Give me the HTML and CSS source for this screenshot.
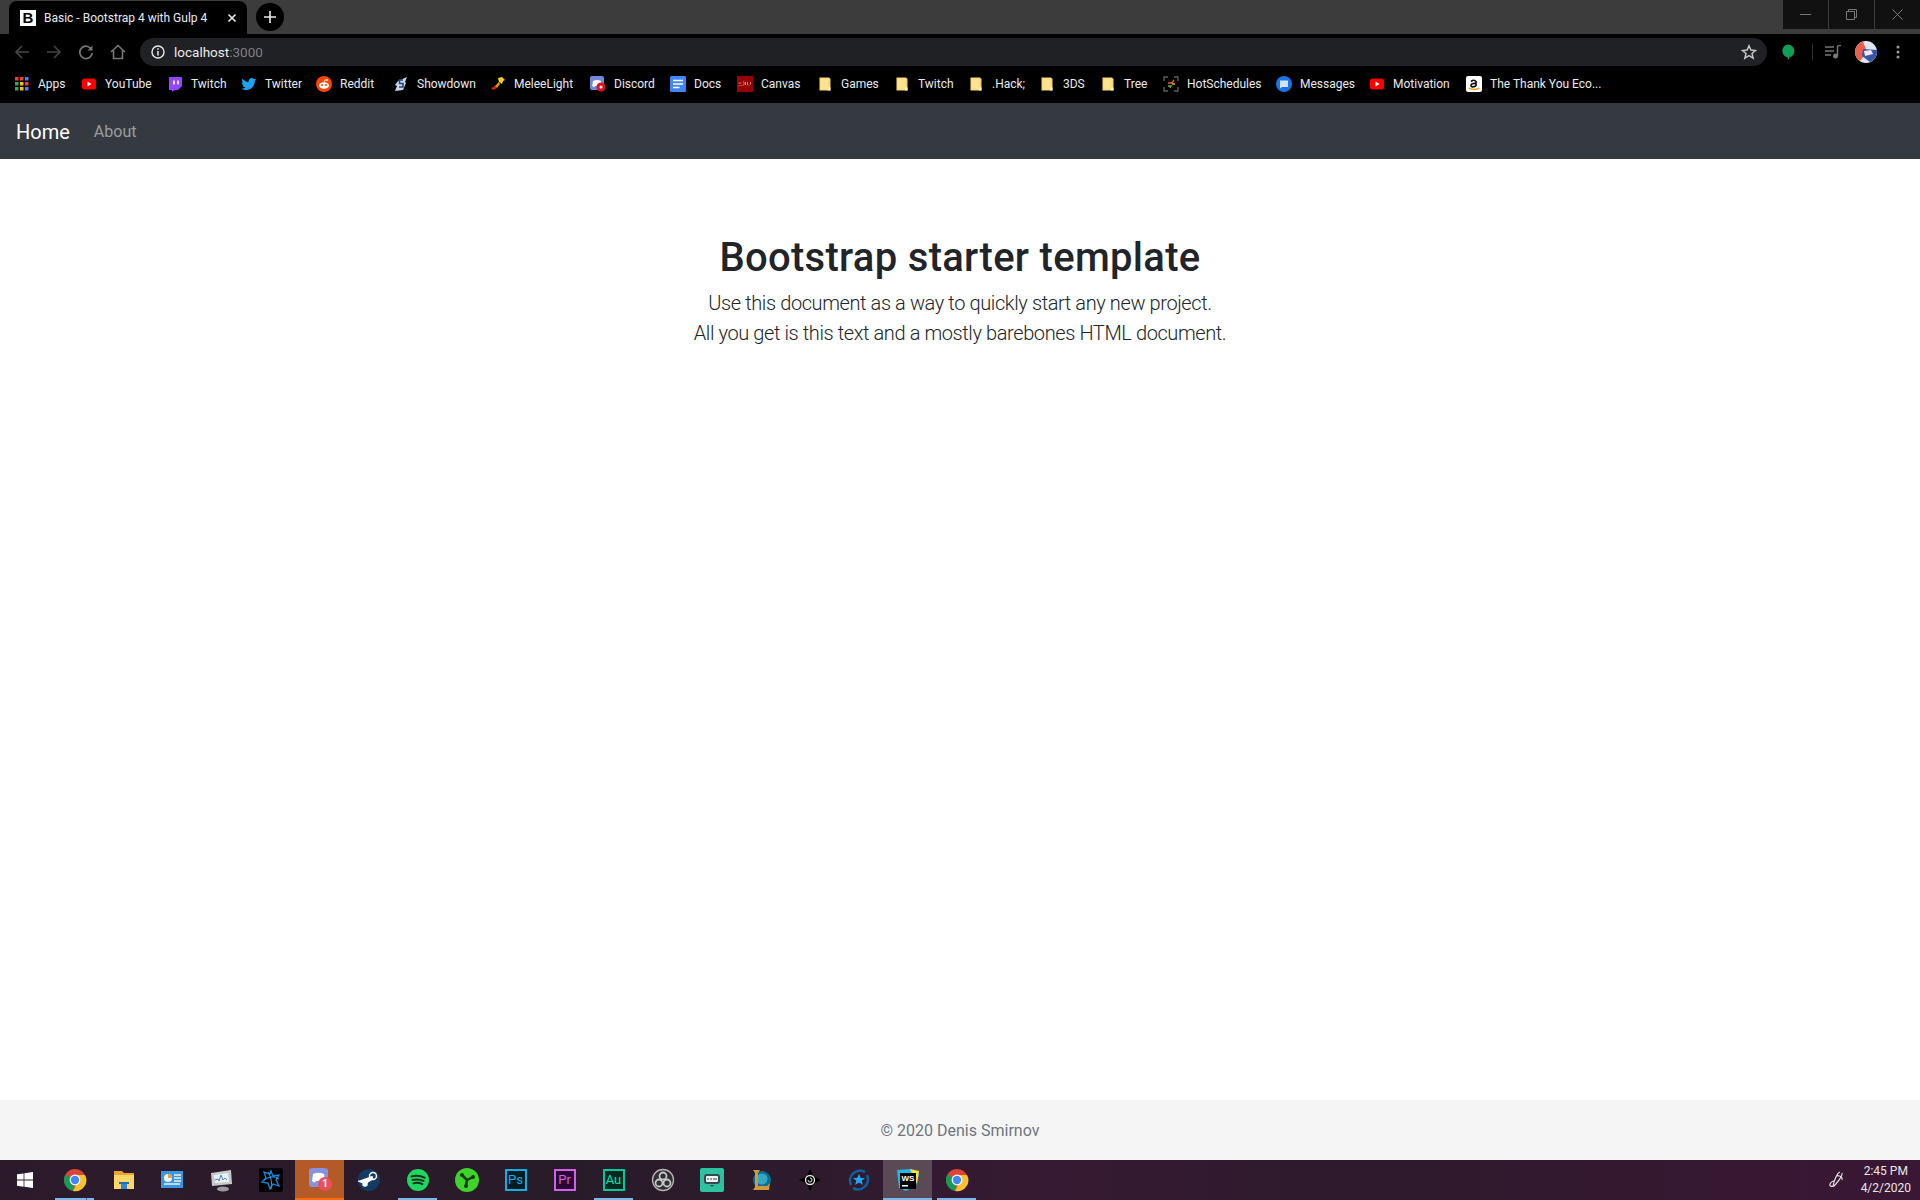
FILE: index.html
```html
<!DOCTYPE html>
<html lang="en">
<head>
    <meta charset="UTF-8">
    <title>Basic - Bootstrap 4 with Gulp 4</title>
    <link rel="stylesheet" href="styles.css">
</head>
<body>
    <svg class="defs" width="0" height="0">
        <symbol id="folder" viewBox="0 0 16 16">
            <path d="M2.500 1.500h9.500l1.500 1.500v11.500h-11z" fill="#fdd663"/>
            <path d="M3.500 2.500h8v11h-8z" fill="#fde293"/>
            <path d="M11 14.500v-3h2.500v3z" fill="#fff3c4"/>
        </symbol>
        <symbol id="yt" viewBox="0 0 16 16">
            <rect x="1" y="2.500" width="14" height="11" rx="2.500" fill="#f00"/>
            <path d="M6.500 5.500l4 2.500-4 2.500z" fill="#fff"/>
        </symbol>
        <symbol id="chrome" viewBox="0 0 24 24">
            <circle cx="12" cy="12" r="11" fill="#db4437"/>
            <path d="M12 12L2.500 6.500A11 11 0 0 0 10 22.800z" fill="#0f9d58"/>
            <path d="M12 7h10A11 11 0 0 1 10 23l5-10z" fill="#fbc02d"/>
            <circle cx="12" cy="12" r="5.400" fill="#fff"/>
            <circle cx="12" cy="12" r="4.200" fill="#4285f4"/>
        </symbol>
    </svg>

    <!-- Browser window frame -->
    <header class="browser">
        <div class="tab-strip">
            <div class="tab">
                <span class="favicon">B</span>
                <span class="tab-title">Basic - Bootstrap 4 with Gulp 4</span>
                <svg class="tab-close" width="10" height="10" viewBox="0 0 10 10"><path d="M1.500 1.500l7 7M8.500 1.500l-7 7" stroke="#e8eaed" stroke-width="1.600"/></svg>
            </div>
            <div class="new-tab">
                <svg width="12" height="12" viewBox="0 0 12 12"><path d="M6 0v12M0 6h12" stroke="#e8eaed" stroke-width="1.600"/></svg>
            </div>
            <div class="window-buttons">
                <div class="window-button"><svg width="11" height="11" viewBox="0 0 11 11"><path d="M0 5.500h11" stroke="#777"/></svg></div>
                <div class="window-button"><svg width="11" height="11" viewBox="0 0 11 11"><path d="M.5 2.500h8v8h-8zM2.500 2.500v-2h8v8h-2" fill="none" stroke="#777"/></svg></div>
                <div class="window-button"><svg width="11" height="11" viewBox="0 0 11 11"><path d="M.5.500l10 10M10.500.500l-10 10" stroke="#777"/></svg></div>
            </div>
        </div>

        <div class="toolbar">
            <svg class="tool" width="16" height="16" viewBox="0 0 16 16"><path d="M15 8H2M8 2L2 8l6 6" fill="none" stroke="#444" stroke-width="1.700"/></svg>
            <svg class="tool" width="16" height="16" viewBox="0 0 16 16"><path d="M1 8h13M8 2l6 6-6 6" fill="none" stroke="#444" stroke-width="1.700"/></svg>
            <svg class="tool" width="16" height="16" viewBox="0 0 16 16"><path d="M13.500 5.500A6.200 6.200 0 1 0 14.200 9" fill="none" stroke="#777" stroke-width="1.700"/><path d="M14.500 1.500v5h-5z" fill="#777"/></svg>
            <svg class="tool" width="16" height="16" viewBox="0 0 16 16"><path d="M1 8l7-6.500L15 8M3.500 6.500v8h9v-8" fill="none" stroke="#777" stroke-width="1.600"/></svg>
            <div class="omnibox">
                <svg width="14" height="14" viewBox="0 0 14 14"><circle cx="7" cy="7" r="6" fill="none" stroke="#e8eaed" stroke-width="1.400"/><path d="M7 6v4.500M7 3.300v1.500" stroke="#e8eaed" stroke-width="1.500"/></svg>
                <span class="url">localhost<span class="url-port">:3000</span></span>
                <svg class="star" width="16" height="16" viewBox="0 0 16 16"><path d="M8 1.800l1.900 4.300 4.600.4-3.500 3 1.100 4.600L8 11.700l-4.100 2.400L5 9.500l-3.500-3 4.600-.4z" fill="none" stroke="#c4c7c5" stroke-width="1.500"/></svg>
            </div>
            <div class="toolbar-right">
                <svg width="14" height="17" viewBox="0 0 14 17"><path d="M7 .5a6.500 6.500 0 0 1 1.500 12.800L7 16.500l-.5-3.200A6.500 6.500 0 0 1 7 .5z" fill="#0f9d58"/></svg>
                <span class="toolbar-divider"></span>
                <svg width="16" height="14" viewBox="0 0 16 14"><path d="M0 2h9M0 6h9M0 10h6" stroke="#777" stroke-width="1.300"/><path d="M12.500 1v10" stroke="#777" stroke-width="1.500"/><path d="M12.500.5H16" stroke="#777" stroke-width="1.500"/><circle cx="10.500" cy="11" r="2.500" fill="#777"/></svg>
                <svg class="avatar" width="22" height="22" viewBox="0 0 22 22">
                    <circle cx="11" cy="11" r="11" fill="#dfe7f3"/>
                    <path d="M0 11A11 11 0 0 1 8 .5L12 11 5 20A11 11 0 0 1 0 11z" fill="#e8604c"/>
                    <path d="M8 8l14 1a11 11 0 0 1-7 12L7 15z" fill="#3357a8"/>
                    <path d="M9 10l7-1 2 4-8 2z" fill="#f4e5ef"/>
                </svg>
                <svg width="4" height="14" viewBox="0 0 4 14"><circle cx="2" cy="2" r="1.500" fill="#999"/><circle cx="2" cy="7" r="1.500" fill="#999"/><circle cx="2" cy="12" r="1.500" fill="#999"/></svg>
            </div>
        </div>

        <div class="bookmarks">
            <a class="bookmark"><svg width="16" height="16" viewBox="0 0 16 16">
                <rect x="1" y="1" width="3.500" height="3.500" fill="#ea4335"/><rect x="6" y="1" width="3.500" height="3.500" fill="#ea4335"/><rect x="11" y="1" width="3.500" height="3.500" fill="#4285f4"/>
                <rect x="1" y="6" width="3.500" height="3.500" fill="#34a853"/><rect x="6" y="6" width="3.500" height="3.500" fill="#fbbc05"/><rect x="11" y="6" width="3.500" height="3.500" fill="#ea4335"/>
                <rect x="1" y="11" width="3.500" height="3.500" fill="#34a853"/><rect x="6" y="11" width="3.500" height="3.500" fill="#fbbc05"/><rect x="11" y="11" width="3.500" height="3.500" fill="#4285f4"/></svg>Apps</a>
            <a class="bookmark"><svg width="16" height="16"><use href="#yt"/></svg>YouTube</a>
            <a class="bookmark"><svg width="16" height="16" viewBox="0 0 16 16"><path d="M2 1h13v9l-4 4H8l-3 2v-2H2z" fill="#9146ff"/><path d="M7 4.500v4M11 4.500v4" stroke="#fff" stroke-width="1.500"/></svg>Twitch</a>
            <a class="bookmark"><svg width="16" height="16" viewBox="0 0 16 16"><path d="M15.500 3.300l-1.600 1.500C14 10 10 14 5.500 14c-2 0-3.500-.5-5-1.500 1.500.2 3-.3 4-1.100-1.300 0-2.400-.9-2.800-2h1.200C1.500 9 .8 7.600.8 6.300l1.300.4C.9 5.500.7 3.900 1.400 2.700 3 4.700 5.200 5.800 7.600 6 7.200 3.800 8.800 2 10.800 2c1 0 1.800.4 2.400 1z" fill="#1da1f2"/></svg>Twitter</a>
            <a class="bookmark"><svg width="16" height="16" viewBox="0 0 16 16"><circle cx="8" cy="8" r="8" fill="#ff4500"/><ellipse cx="8" cy="9.500" rx="5" ry="3.300" fill="#fff"/><circle cx="6" cy="9" r="1" fill="#ff4500"/><circle cx="10" cy="9" r="1" fill="#ff4500"/><circle cx="11" cy="4" r="1" fill="#fff"/><path d="M8 6.500L9 3.800l2 .3" stroke="#fff" fill="none" stroke-width=".8"/></svg>Reddit</a>
            <a class="bookmark"><svg width="16" height="16" viewBox="0 0 16 16"><path d="M5 5l9-4-2 5 1 1-3 7-8 1 2-5-2-1z" fill="#c9d8e6"/><path d="M10 4H6.500v3.500H10V11H6" fill="none" stroke="#234a7d" stroke-width="1.600"/></svg>Showdown</a>
            <a class="bookmark"><svg width="16" height="16" viewBox="0 0 16 16"><path d="M8 2l4-1 3 3-2 1-1 3-3-2z" fill="#f3d21b"/><path d="M9 6l-5 5 3 1 3-4z" fill="#d9a400"/><path d="M1 12l5-2 1 2-4 2z" fill="#d9230f"/></svg>MeleeLight</a>
            <a class="bookmark"><svg width="16" height="16" viewBox="0 0 16 16"><rect x="0" y="0" width="14" height="14" rx="2" fill="#7289da"/><path d="M3 5q4-2 8 0l.8 5q-1 1-2.300 1l-.5-1H5l-.5 1q-1.300 0-2.300-1z" fill="#fff"/><circle cx="11" cy="11" r="4.500" fill="#e00f1d"/><circle cx="11" cy="11" r="1.500" fill="#fff"/></svg>Discord</a>
            <a class="bookmark"><svg width="16" height="16" viewBox="0 0 16 16"><rect width="16" height="16" rx="1.500" fill="#4285f4"/><path d="M3 4.500h10M3 8h10M3 11.500h6.500" stroke="#fff" stroke-width="1.600"/></svg>Docs</a>
            <a class="bookmark"><svg width="16" height="16" viewBox="0 0 16 16"><rect width="16" height="16" fill="#990000"/><path d="M1.500 7h3M6 6h1v3M8.500 6v3M10.500 6v3h2M13.500 6v2.500" stroke="#e4b9b9" stroke-width=".7"/><path d="M1 10l6-1" stroke="#d88" stroke-width=".5"/></svg>Canvas</a>
            <a class="bookmark"><svg width="16" height="16"><use href="#folder"/></svg>Games</a>
            <a class="bookmark"><svg width="16" height="16"><use href="#folder"/></svg>Twitch</a>
            <a class="bookmark"><svg width="16" height="16"><use href="#folder"/></svg>.Hack;</a>
            <a class="bookmark"><svg width="16" height="16"><use href="#folder"/></svg>3DS</a>
            <a class="bookmark"><svg width="16" height="16"><use href="#folder"/></svg>Tree</a>
            <a class="bookmark"><svg width="16" height="16" viewBox="0 0 16 16"><path d="M5 1H1v4M11 1h4v4M5 15H1v-4M11 15h4v-4" fill="none" stroke="#5c5c5c" stroke-width="1.400"/><path d="M5 7h4l2-3" fill="none" stroke="#e8622a" stroke-width="1.400"/><path d="M9 8h3" stroke="#f3c11b" stroke-width="1.400"/><path d="M5 10h3l-1 2" fill="none" stroke="#6aa84f" stroke-width="1.400"/></svg>HotSchedules</a>
            <a class="bookmark"><svg width="16" height="16" viewBox="0 0 16 16"><circle cx="8" cy="8" r="8" fill="#1a73e8"/><path d="M4 4.500h8v6.500H6l-2 1.500z" fill="#d2e3fc"/></svg>Messages</a>
            <a class="bookmark"><svg width="16" height="16"><use href="#yt"/></svg>Motivation</a>
            <a class="bookmark"><svg width="16" height="16" viewBox="0 0 16 16"><rect width="16" height="16" rx="2" fill="#fff"/><path d="M5 5.500q3-2.500 5 0V10M10 7.500q-5-.5-5 2t5 .5" fill="none" stroke="#111" stroke-width="1.700"/><path d="M2.500 12q5.500 3 11 0" fill="none" stroke="#f90" stroke-width="1.300"/></svg>The Thank You Eco...</a>
        </div>
    </header>

    <!-- Page navbar -->
    <nav class="navbar">
        <a class="navbar-brand">Home</a>
        <a class="nav-link">About</a>
    </nav>

    <main class="main">
        <h1 class="title">Bootstrap starter template</h1>
        <p class="lead">Use this document as a way to quickly start any new project.<br>All you get is this text and a mostly barebones HTML document.</p>
    </main>

    <footer class="footer">© 2020 Denis Smirnov</footer>

    <!-- Windows taskbar -->
    <div class="taskbar">
        <div class="task-item task-start"><svg width="16" height="16" viewBox="0 0 16 16"><path d="M0 2.300l6.600-.9v6.200H0zM7.400 1.300L16 0v7.600H7.400zM0 8.400h6.600v6.300L0 13.800zM7.400 8.400H16V16l-8.600-1.200z" fill="#fff"/></svg></div>
        <div class="task-item is-open is-stacked"><svg width="24" height="24"><use href="#chrome"/></svg></div>
        <div class="task-item"><svg width="24" height="24" viewBox="0 0 24 24"><path d="M2 3h8l2 2h10v5H2z" fill="#e8a33d"/><path d="M2 7h20v14H2z" fill="#ffd768"/><path d="M9 14h6v7H9z" fill="#2b88d8"/><path d="M7 14h10v2H7z" fill="#1d6fb8"/></svg></div>
        <div class="task-item"><svg width="24" height="24" viewBox="0 0 24 24"><rect y="3" width="22" height="17" fill="#3a96dd"/><circle cx="7" cy="10" r="4" fill="#f4f4f4"/><path d="M7 10V6a4 4 0 0 1 4 4z" fill="#e8a33d"/><path d="M13 7h7M13 10h7M13 13h7M3 16h16" stroke="#e6f3fb" stroke-width="1.500"/></svg></div>
        <div class="task-item"><svg width="24" height="24" viewBox="0 0 24 24"><path d="M1 5l20-3 1 14-20 2z" fill="#c5c9cc"/><path d="M4 7l14-2 1 9-14 1z" fill="#e9eff3"/><path d="M5 12l3-1 1 2 2-6 2 5 2-2 2 2" fill="none" stroke="#4a88b5" stroke-width="1"/><ellipse cx="13" cy="21" rx="6" ry="2.500" fill="#9a9a9a"/></svg></div>
        <div class="task-item"><svg width="24" height="24" viewBox="0 0 24 24"><rect width="24" height="24" rx="2" fill="#000"/><path d="M12 3l2 5 6-1-3 5 3 6-6-2-3 5-2-6-6-1 4-4-2-6 6 2z" fill="none" stroke="#0d8ee0" stroke-width="1.300"/><path d="M5 12q8-6 15-1M9 4q5 8 3 17" fill="none" stroke="#27a6f5" stroke-width="1"/></svg></div>
        <div class="task-item is-alert">
            <svg width="24" height="24" viewBox="0 0 24 24"><rect x="1" y="1" width="19" height="19" rx="3" fill="#8692dd"/><path d="M5 7q5.500-2.500 11 0l1 7q-1.500 1.500-3 1.500l-.7-1.500H7.700L7 15.500q-1.500 0-3-1.500z" fill="#fff"/></svg>
            <span class="task-badge">1</span>
        </div>
        <div class="task-item"><svg width="24" height="24" viewBox="0 0 24 24"><circle cx="12" cy="12" r="11" fill="#123a63"/><path d="M1 13l7 3 8-5-1-3" fill="#fff" stroke="#fff"/><circle cx="16" cy="8" r="3.500" fill="none" stroke="#fff" stroke-width="1.500"/><circle cx="8" cy="16" r="2.800" fill="#fff"/></svg></div>
        <div class="task-item is-open"><svg width="24" height="24" viewBox="0 0 24 24"><circle cx="12" cy="12" r="11" fill="#1ed760"/><path d="M5.500 8.500q7-2 13 1.200M6.500 12q6-1.600 11 1M7.500 15.300q5-1.200 8.800.8" fill="none" stroke="#14321f" stroke-width="2" stroke-linecap="round"/></svg></div>
        <div class="task-item"><svg width="24" height="24" viewBox="0 0 24 24"><circle cx="12" cy="12" r="12" fill="#3fd22c"/><path d="M12 12L7 7M12 12l6-3M12 12l-1 6" stroke="#143a10" stroke-width="2.500"/><circle cx="7" cy="7" r="2" fill="#143a10"/><circle cx="18" cy="9" r="2" fill="#143a10"/><circle cx="11" cy="18" r="2" fill="#143a10"/></svg></div>
        <div class="task-item"><span class="adobe adobe-ps">Ps</span></div>
        <div class="task-item"><span class="adobe adobe-pr">Pr</span></div>
        <div class="task-item is-open"><span class="adobe adobe-au">Au</span></div>
        <div class="task-item"><svg width="24" height="24" viewBox="0 0 24 24"><circle cx="12" cy="12" r="10.500" fill="#302e31" stroke="#b5b5b5" stroke-width="1.300"/><circle cx="12" cy="8" r="3.500" fill="none" stroke="#c8c8c8" stroke-width="1.800"/><circle cx="8" cy="15" r="3.500" fill="none" stroke="#c8c8c8" stroke-width="1.800"/><circle cx="16" cy="15" r="3.500" fill="none" stroke="#c8c8c8" stroke-width="1.800"/></svg></div>
        <div class="task-item"><svg width="24" height="24" viewBox="0 0 24 24"><rect width="24" height="24" rx="2" fill="#2cc2a0"/><rect x="4" y="6" width="16" height="10" rx="3" fill="#37474f"/><rect x="6" y="8" width="12" height="6" rx="1" fill="#e8f5f2"/><path d="M8 10v2M11 10v2M14 10v2M16 10v2" stroke="#37474f"/><path d="M10 17h4l-2 2z" fill="#37474f"/></svg></div>
        <div class="task-item"><svg width="24" height="24" viewBox="0 0 24 24"><circle cx="13" cy="12" r="9" fill="#0d6e8e"/><circle cx="13" cy="11" r="5.500" fill="#35a7c4"/><path d="M4 2h7L9 5v13h9l3-3-1 7H4l2-3V5z" fill="#cf9a3c"/></svg></div>
        <div class="task-item"><svg width="24" height="24" viewBox="0 0 24 24"><path d="M12 1l3 7 8 4-8 4-3 7-3-7-8-4 8-4z" fill="#000"/><circle cx="12" cy="12" r="4.500" fill="none" stroke="#e8e8e8" stroke-width="1.300"/><path d="M12 10a2 2 0 1 1-2 2" fill="none" stroke="#e8e8e8"/></svg></div>
        <div class="task-item"><svg width="24" height="24" viewBox="0 0 24 24"><path d="M4 17a10 10 0 0 1 14-13M20 7a10 10 0 0 1-14 13" fill="none" stroke="#0f5f9e" stroke-width="2.600"/><path d="M12 6l1.800 4h4.200l-3.300 2.800 1.200 4.200-3.900-2.400L8.100 17l1.200-4.200L6 10h4.200z" fill="#1ea8f5"/></svg></div>
        <div class="task-item is-open is-active"><svg width="24" height="24" viewBox="0 0 24 24"><path d="M1 2l14-1 8 5-3 12-10 5-7-3z" fill="#22b8e6"/><path d="M14 1l9 2-2 13z" fill="#f4e04d"/><rect x="4" y="5" width="16" height="16" fill="#000"/><text class="ws-mark" x="5.500" y="13">WS</text><rect x="6" y="17" width="6" height="1.500" fill="#fff"/></svg></div>
        <div class="task-item is-open"><svg width="24" height="24"><use href="#chrome"/></svg></div>
        <div class="tray">
            <svg width="16" height="18" viewBox="0 0 16 18"><path d="M12 1C9 2 6 10 5 15M14 2c1 3-6 11-8 13-2 1-5 0-4-2s4-4 5-3M9 5c2-1 6 1 5 4" fill="none" stroke="#eee" stroke-width="1.100"/></svg>
            <div class="clock">2:45 PM<br>4/2/2020</div>
        </div>
    </div>
</body>
</html>
```

FILE: styles.css
```css
* {
    box-sizing: border-box;
    margin: 0;
    padding: 0;
}

body {
    display: flex;
    flex-direction: column;
    height: 100vh;
    overflow: hidden;
    background-color: #ffffff;
    font-family: Roboto, sans-serif;
    color: #212529;
}

.defs {
    position: absolute;
}

/* Browser frame */
.browser {
    background-color: #000000;
}

.tab-strip {
    display: flex;
    align-items: flex-start;
    height: 34px;
    padding-left: 9px;
    background-color: #3c3c3c;
}

.tab {
    display: flex;
    align-items: center;
    width: 238px;
    height: 33px;
    margin-top: 1px;
    padding: 0 10px 0 11px;
    background-color: #000000;
    border-radius: 8px 8px 0 0;
}

.favicon {
    display: flex;
    justify-content: center;
    align-items: center;
    width: 16px;
    height: 16px;
    background-color: #ffffff;
    font-family: 'Liberation Sans', sans-serif;
    font-size: 15px;
    font-weight: 700;
    color: #000000;
}

.tab-title {
    flex: 1;
    margin-left: 8px;
    font-size: 12px;
    color: #e8eaed;
    white-space: nowrap;
}

.new-tab {
    display: flex;
    justify-content: center;
    align-items: center;
    width: 28px;
    height: 28px;
    margin: 3px 0 0 9px;
    border-radius: 50%;
    background-color: #000000;
}

.window-buttons {
    display: flex;
    gap: 1px;
    height: 29px;
    margin-left: auto;
}

.window-button {
    display: flex;
    justify-content: center;
    align-items: center;
    width: 45px;
    background-color: #111111;
}

.toolbar {
    display: flex;
    align-items: center;
    height: 33px;
    padding: 3px 0 0 14px;
    background-color: #000000;
}

.tool {
    margin-right: 16px;
}

.omnibox {
    display: flex;
    flex: 1;
    align-items: center;
    height: 28px;
    margin-left: -2px;
    padding: 0 10px 0 11px;
    background-color: #202124;
    border-radius: 14px;
}

.url {
    margin-left: 9px;
    font-size: 13.500px;
    color: #e8eaed;
}

.url-port {
    color: #7d7f83;
}

.star {
    margin-left: auto;
}

.toolbar-right {
    display: flex;
    align-items: center;
    width: 153px;
    padding-left: 14px;
}

.toolbar-divider {
    width: 1px;
    height: 16px;
    margin: 0 12px 0 17px;
    background-color: #2e2e2e;
}

.avatar {
    margin: 0 19px 0 14px;
}

.bookmarks {
    display: grid;
    grid-template-columns: 67px 86px 74px 75px 77px 97px 100px 80px 67px 80px 77px 74px 71px 61px 63px 113px 93px 97px 1fr;
    height: 36px;
    padding: 0 0 3px 14px;
    background-color: #000000;
}

.bookmark {
    display: flex;
    align-items: center;
    gap: 8px;
    font-size: 12px;
    color: #e8eaed;
    white-space: nowrap;
}

/* Page */
.navbar {
    display: flex;
    align-items: center;
    height: 56px;
    padding: 0 16px;
    background-color: #343a40;
}

.navbar-brand {
    margin: 2px 24px 0 0;
    font-size: 20px;
    color: #ffffff;
}

.nav-link {
    font-size: 16px;
    color: rgba(255, 255, 255, 0.5);
}

.main {
    flex: 1;
    padding-top: 75px;
    text-align: center;
}

.title {
    margin-bottom: 6px;
    font-size: 40px;
    font-weight: 500;
    line-height: 48px;
    letter-spacing: 0.3px;
}

.lead {
    font-size: 20px;
    font-weight: 300;
    line-height: 30px;
    letter-spacing: -0.4px;
}

.footer {
    height: 60px;
    padding-top: 19px;
    background-color: #f5f5f5;
    font-size: 16px;
    line-height: 24px;
    color: #6c757d;
    text-align: center;
}

/* Taskbar */
.taskbar {
    display: flex;
    height: 40px;
    background: linear-gradient(90deg, #2c1a2b, #281b28 30%, #361a33 55%, #2e1a2c 70%, #3a1735);
}

.task-item {
    position: relative;
    display: flex;
    justify-content: center;
    align-items: center;
    width: 49px;
}

.task-start {
    width: 50px;
}

.task-item.is-open::after {
    content: '';
    position: absolute;
    left: 5px;
    right: 5px;
    bottom: 0;
    height: 2px;
    background-color: #76b9ed;
}

.task-item.is-stacked::before {
    content: '';
    position: absolute;
    right: 12px;
    bottom: 0;
    z-index: 1;
    width: 1px;
    height: 2px;
    background-color: #3d6e93;
}

.task-item.is-alert {
    background-color: #b45a26;
    border-bottom: 2px solid #ff6a00;
}

.task-item.is-active {
    background-color: #5a4a55;
}

.task-item.is-active::after {
    left: 0;
    right: 0;
}

.task-badge {
    position: absolute;
    top: 17px;
    left: 23px;
    width: 14px;
    height: 14px;
    border-radius: 50%;
    background-color: #e8505b;
    font-size: 10px;
    font-weight: 700;
    line-height: 14px;
    color: #ffffff;
    text-align: center;
}

.adobe {
    width: 22px;
    height: 22px;
    border: 2px solid;
    font-size: 13px;
    line-height: 18px;
    text-align: center;
}

.adobe-ps {
    border-color: #14aee5;
    background-color: #001d26;
    color: #14aee5;
}

.adobe-pr {
    border-color: #cf63e8;
    background-color: #2a0634;
    color: #cf63e8;
}

.adobe-au {
    border-color: #00c8a0;
    background-color: #00281f;
    color: #00e4b5;
}

.ws-mark {
    font-family: 'Liberation Sans', sans-serif;
    font-size: 8px;
    font-weight: 700;
    fill: #ffffff;
}

.tray {
    display: flex;
    align-items: center;
    gap: 17px;
    margin-left: auto;
    padding-right: 9px;
}

.clock {
    font-size: 12px;
    line-height: 17px;
    color: #e8e8e8;
    text-align: center;
}
```
